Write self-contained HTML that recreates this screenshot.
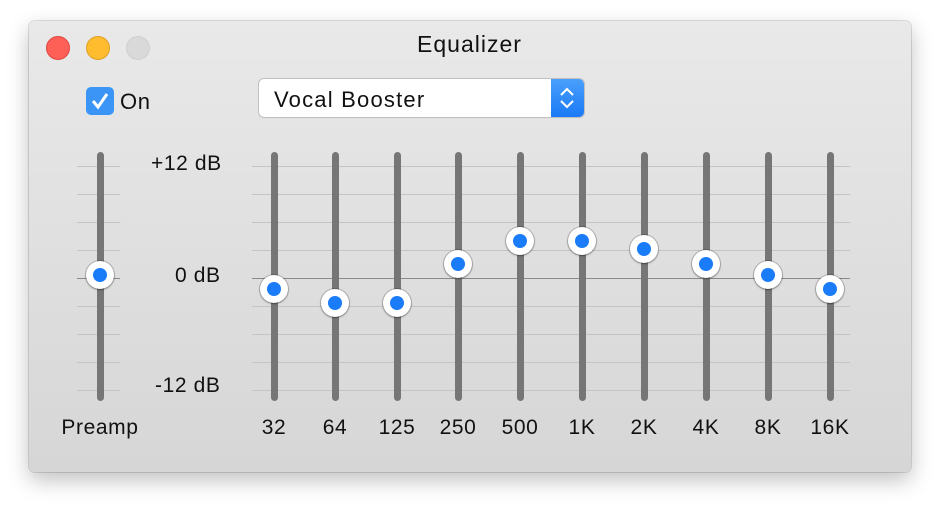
<!DOCTYPE html><html><head><style>
body{margin:0;width:939px;height:509px;background:#fff;position:relative;font-family:"Liberation Sans",sans-serif;overflow:hidden}
.win{position:absolute;left:29px;top:21px;width:882px;height:451px;border-radius:6px;background:linear-gradient(#e9e9e9,#d6d6d6);box-shadow:0 0 0 1px rgba(0,0,0,.12),0 8px 22px rgba(0,0,0,.25)}
.a{position:absolute}
.tl{width:24px;height:24px;border-radius:50%;top:36px}
.txt{position:absolute;font-size:21px;color:#111;letter-spacing:.6px;white-space:nowrap}
.trk{position:absolute;width:7px;top:152px;height:249px;background:#767676;border-radius:4px}
.g{position:absolute;height:1px;background:#c4c4c4}
.k{position:absolute;width:28px;height:28px;border-radius:50%;background:#fff;box-shadow:0 0 0 1px rgba(0,0,0,.18),0 1px 2px rgba(0,0,0,.3)}
.k:after{content:"";position:absolute;left:7px;top:7px;width:14px;height:14px;border-radius:50%;background:#1a7cf8}
</style></head><body>
<div class="win"></div>
<div class="a tl" style="left:46px;background:#fe5f57;border:1px solid #e14640;width:22px;height:22px"></div>
<div class="a tl" style="left:86px;background:#febc2e;border:1px solid #dea123;width:22px;height:22px"></div>
<div class="a tl" style="left:126px;background:#d9d9d9;border:1px solid #cfcfcf;width:22px;height:22px"></div>
<div class="txt" style="left:0;width:939px;text-align:center;top:31px;font-size:23px;letter-spacing:1px">Equalizer</div>
<div class="a" style="left:86px;top:87px;width:28px;height:28px;border-radius:5px;background:#3b95f7"><svg width="28" height="28"><path d="M7 14l5 6 9-13" stroke="#fff" stroke-width="3" fill="none"/></svg></div>
<div class="txt" style="left:120px;top:89px;font-size:22px">On</div>
<div class="a" style="left:259px;top:79px;width:325px;height:38px;border-radius:5px;background:#fff;box-shadow:0 0 0 1px #c0c0c0,0 1px 1px rgba(0,0,0,.15);overflow:hidden">
<div class="a" style="right:0;top:0;width:33px;height:38px;background:linear-gradient(#4aa0fb,#1a79f6)"><svg width="33" height="38"><path d="M10 16l6-6 6 6M10 22l6 6 6-6" stroke="#fff" stroke-width="2" fill="none"/></svg></div></div>
<div class="txt" style="left:274px;top:87px;font-size:22px;letter-spacing:1.2px">Vocal Booster</div>
<div class="txt" style="left:151px;top:152px">+12 dB</div>
<div class="txt" style="left:175px;top:264px">0 dB</div>
<div class="txt" style="left:155px;top:374px">-12 dB</div>
<div id="grid"></div>
<script>
var h='';
for(var i=0;i<9;i++){var y=166+i*28;var c=i==4?'#8a8a8a':'#c4c4c4';
h+='<div class="g" style="left:77px;width:43px;top:'+y+'px;background:'+c+'"></div><div class="g" style="left:252px;width:598px;top:'+y+'px;background:'+c+'"></div>';}
var xs=[100,274,335,397,458,520,582,644,706,768,830],ys=[275,289,303,303,264,241,241,249,264,275,289],
lb=['Preamp','32','64','125','250','500','1K','2K','4K','8K','16K'];
for(var i=0;i<11;i++){h+='<div class="trk" style="left:'+(xs[i]-3)+'px"></div>';}
for(var i=0;i<11;i++){h+='<div class="k" style="left:'+(xs[i]-14)+'px;top:'+(ys[i]-14)+'px"></div>';
h+='<div class="txt" style="left:'+(xs[i]-50)+'px;width:100px;text-align:center;top:416px">'+lb[i]+'</div>';}
document.getElementById('grid').innerHTML=h;
</script>
</body></html>
